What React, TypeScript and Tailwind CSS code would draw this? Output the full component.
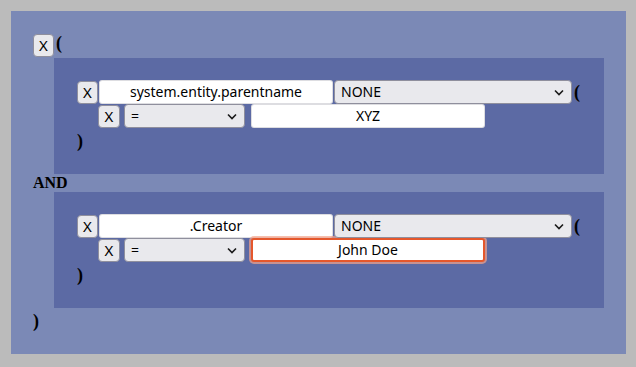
import { ChangeEvent, useState } from "react";

type Cond = { id: string; field: string; func: string; op: string; value: string; focused?: boolean };

const FUNCS = ["NONE", "UPPER", "LOWER", "TRIM"];
const OPS = ["=", "!=", "<", ">", "LIKE"];

function XButton({ className = "" }: { className?: string }) {
  return (
    <button
      type="button"
      className={
        "h-[23px] w-[21px] shrink-0 rounded-[4px] border border-[#8f8f9d] bg-[#e9e9ed] text-[15px] leading-none text-black font-['Noto_Sans',sans-serif] " +
        className
      }
    >
      X
    </button>
  );
}

function Select({
  value,
  options,
  width,
  onChange,
}: {
  value: string;
  options: string[];
  width: string;
  onChange: (v: string) => void;
}) {
  return (
    <div className={"relative shrink-0 " + width}>
      <select
        value={value}
        onChange={(e: ChangeEvent<HTMLSelectElement>) => onChange(e.target.value)}
        className="h-[24px] w-full appearance-none rounded-[4px] border border-[#8f8f9d] bg-[#e9e9ed] pl-[6px] text-[14px] text-black outline-none font-['Noto_Sans',sans-serif]"
      >
        {options.map((o) => (
          <option key={o}>{o}</option>
        ))}
      </select>
      <svg
        className="pointer-events-none absolute right-[8px] top-[9px]"
        width="10"
        height="7"
        viewBox="0 0 10 7"
        fill="none"
      >
        <path d="M1 1.5 L5 5.5 L9 1.5" stroke="#1a1a1a" strokeWidth="1.6" />
      </svg>
    </div>
  );
}

function TextBox({ value, focused, onChange }: { value: string; focused?: boolean; onChange: (v: string) => void }) {
  return (
    <input
      value={value}
      onChange={(e) => onChange(e.target.value)}
      className={
        "h-[24px] w-[234px] shrink-0 rounded-[3px] bg-white text-center text-[14px] text-black outline-none font-['Noto_Sans',sans-serif] " +
        (focused
          ? "border-2 border-[#e5572c] ring-2 ring-[#f3a48c]/70"
          : "border border-[#8f8f9d]/30")
      }
    />
  );
}

function Paren({ children, className = "" }: { children: string; className?: string }) {
  return <span className={"text-[18px] font-bold leading-[19px] " + className}>{children}</span>;
}

function Group({ cond, onChange }: { cond: Cond; onChange: (c: Cond) => void }) {
  return (
    <div className="ml-[21px] bg-[#5c6aa4] pl-[23px] pt-[22px] pb-[27px]">
      <div className="flex h-[24px] items-center">
        <XButton />
        <div className="ml-[1px]">
          <TextBox value={cond.field} onChange={(v) => onChange({ ...cond, field: v })} />
        </div>
        <div className="ml-[1px]">
          <Select
            value={cond.func}
            options={FUNCS}
            width="w-[238px]"
            onChange={(v) => onChange({ ...cond, func: v })}
          />
        </div>
        <Paren className="ml-[2px]">(</Paren>
      </div>
      <div className="ml-[21px] flex h-[24px] items-center">
        <XButton className="w-[22px]" />
        <div className="ml-[4px]">
          <Select value={cond.op} options={OPS} width="w-[121px]" onChange={(v) => onChange({ ...cond, op: v })} />
        </div>
        <div className="ml-[6px]">
          <TextBox value={cond.value} focused={cond.focused} onChange={(v) => onChange({ ...cond, value: v })} />
        </div>
      </div>
      <div className="h-[19px] pt-[2px]">
        <Paren>)</Paren>
      </div>
    </div>
  );
}

export default function App() {
  const [conds, setConds] = useState<Cond[]>([
    { id: "a", field: "system.entity.parentname", func: "NONE", op: "=", value: "XYZ" },
    { id: "b", field: ".Creator", func: "NONE", op: "=", value: "John Doe", focused: true },
  ]);

  const update = (i: number) => (c: Cond) => setConds((cs) => cs.map((x, j) => (j === i ? c : x)));

  return (
    <div className="min-h-screen bg-[#bbbbbb] pl-[11px] pr-[10px] pt-[11px] text-black font-['Liberation_Serif',serif]">
      <div className="bg-[#7b89b6] pl-[22px] pr-[22px] pt-[23px] pb-[27px]">
        <div className="flex h-[24px] items-start">
          <XButton />
          <Paren className="ml-[2px]">(</Paren>
        </div>
        <Group cond={conds[0]} onChange={update(0)} />
        <div className="h-[18px] text-[16px] font-bold leading-[18px]">AND</div>
        <Group cond={conds[1]} onChange={update(1)} />
        <div className="h-[19px] pt-[2px]">
          <Paren>)</Paren>
        </div>
      </div>
    </div>
  );
}
